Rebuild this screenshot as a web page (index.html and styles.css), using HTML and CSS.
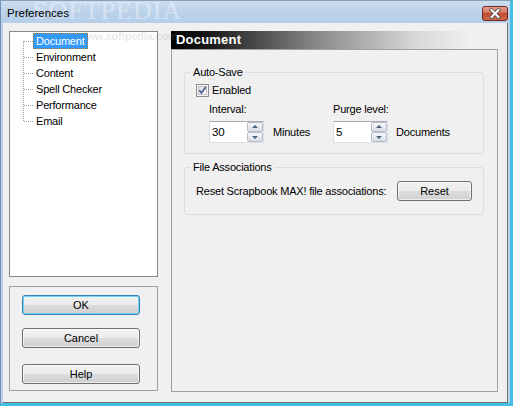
FILE: index.html
```html
<!DOCTYPE html>
<html>
<head>
<meta charset="utf-8">
<title>Preferences</title>
<link rel="stylesheet" href="styles.css">
</head>
<body>
<div class="window">
  <div class="titlebar">
    <span class="title">Preferences</span>
    <span class="watermark">SOFTPEDIA</span>
    <span class="close">
      <svg width="26" height="15" viewBox="0 0 26 15">
        <defs>
          <linearGradient id="cg" x1="0" y1="0" x2="0" y2="1">
            <stop offset="0" stop-color="#e8a493"/>
            <stop offset="0.45" stop-color="#d47560"/>
            <stop offset="0.5" stop-color="#c4482f"/>
            <stop offset="1" stop-color="#cf6a4a"/>
          </linearGradient>
        </defs>
        <rect x="0.5" y="0.5" width="25" height="14" rx="2.5" fill="url(#cg)" stroke="#6e2b22"/>
        <path d="M9.5 4 L16.5 11 M16.5 4 L9.5 11" stroke="#4a4a4a" stroke-width="3.6" stroke-linecap="square"/>
        <path d="M9.5 4 L16.5 11 M16.5 4 L9.5 11" stroke="#ffffff" stroke-width="2" stroke-linecap="square"/>
      </svg>
    </span>
  </div>
  <div class="client">
    <div class="leftcol">
      <div class="tree">
        <span class="wm2">www.softpedia.com</span>
        <ul class="tree-list">
          <li><span class="node selected">Document</span></li>
          <li><span class="node">Environment</span></li>
          <li><span class="node">Content</span></li>
          <li><span class="node">Spell Checker</span></li>
          <li><span class="node">Performance</span></li>
          <li><span class="node">Email</span></li>
        </ul>
      </div>
      <div class="btngroup">
        <div class="btn default">OK</div>
        <div class="btn cancel">Cancel</div>
        <div class="btn help">Help</div>
      </div>
    </div>
    <div class="panel">
      <div class="panel-head">Document</div>
      <div class="panel-body">
        <fieldset class="group autosave">
          <legend>Auto-Save</legend>
          <div class="check">
            <span class="cb">
              <svg width="13" height="13" viewBox="0 0 13 13">
                <defs>
                  <linearGradient id="cbg" x1="0" y1="0" x2="1" y2="1">
                    <stop offset="0" stop-color="#dadada"/>
                    <stop offset="1" stop-color="#ffffff"/>
                  </linearGradient>
                </defs>
                <rect x="0.5" y="0.5" width="12" height="12" fill="#f4f4f4" stroke="#8e8f8f"/>
                <rect x="2.5" y="2.5" width="8" height="8" fill="url(#cbg)" stroke="#c4c4c4"/>
                <path d="M3.2 6.3 L5.4 8.8 L9.8 3" fill="none" stroke="#4a5f95" stroke-width="1.7"/>
              </svg>
            </span>
            <span>Enabled</span>
          </div>
          <div class="fields">
            <div class="field interval">
              <div class="flabel">Interval:</div>
              <div class="spinrow">
                <div class="spin">
                  <span class="val">30</span>
                  <div class="arrows"><span class="arr up"></span><span class="arr down"></span></div>
                </div>
                <span class="unit">Minutes</span>
              </div>
            </div>
            <div class="field purge">
              <div class="flabel">Purge level:</div>
              <div class="spinrow">
                <div class="spin">
                  <span class="val">5</span>
                  <div class="arrows"><span class="arr up"></span><span class="arr down"></span></div>
                </div>
                <span class="unit">Documents</span>
              </div>
            </div>
          </div>
        </fieldset>
        <fieldset class="group files">
          <legend>File Associations</legend>
          <div class="reset-row">
            <span class="reset-text">Reset Scrapbook MAX! file associations:</span>
            <div class="btn reset">Reset</div>
          </div>
        </fieldset>
      </div>
    </div>
  </div>
</div>
</body>
</html>
```

FILE: styles.css
```css
html, body {
  margin: 0;
  padding: 0;
  background: #ffffff;
}
body {
  font-family: "Liberation Sans", Arial, sans-serif;
  font-size: 11px;
  letter-spacing: -0.2px;
  color: #000;
}
.window {
  width: 513px;
  height: 406px;
  box-sizing: border-box;
  background: #bdd3eb;
  border-top: 1px solid #8aa0b8;
  border-left: 1px solid #6f90b4;
  border-right: 3px solid #41bfe7;
  border-bottom: 3px solid #41bfe7;
  display: flex;
  flex-direction: column;
  position: relative;
  overflow: hidden;
}
.titlebar {
  height: 22px;
  flex: none;
  display: flex;
  align-items: center;
  background: linear-gradient(180deg, #cddcee 0%, #bad1ea 55%, #b6cee9 100%);
  position: relative;
}
.title {
  margin-left: 6px;
  margin-top: 1px;
  font-size: 11.5px;
  letter-spacing: 0;
  color: #000;
  position: relative;
  z-index: 1;
}
.watermark {
  position: absolute;
  left: 32px;
  top: 0;
  line-height: 20px;
  font-family: "Liberation Serif", "Times New Roman", serif;
  font-size: 26px;
  letter-spacing: 1px;
  color: rgba(255, 255, 255, 0.4);
}
.close {
  margin-left: auto;
  margin-right: 2px;
  margin-top: 2px;
  width: 26px;
  height: 15px;
  display: block;
}
.close svg { display: block; }

.client {
  flex: 1;
  margin-left: 2px;
  margin-right: 2px;
  background: #f0f0f0;
  border-right: 1px solid #707070;
  border-bottom: 1px solid #707070;
  display: flex;
  padding: 8px 0 0 6px;
  box-sizing: border-box;
}
.leftcol {
  width: 149px;
  display: flex;
  flex-direction: column;
}
.tree {
  height: 246px;
  box-sizing: border-box;
  background: #fff;
  border: 1px solid #828790;
  position: relative;
}
.wm2 {
  position: absolute;
  left: 68px;
  top: -2px;
  color: rgba(150, 150, 150, 0.22);
  font-size: 11px;
  font-weight: bold;
}
.tree-list {
  list-style: none;
  margin: 0;
  padding: 1px 0 0 0;
  position: relative;
}
.tree-list::before {
  content: "";
  position: absolute;
  left: 13px;
  top: 9px;
  height: 80px;
  border-left: 1px dotted #a0a0a0;
}
.tree-list li {
  height: 16px;
  padding-left: 23px;
  position: relative;
  display: flex;
  align-items: center;
}
.tree-list li::before {
  content: "";
  position: absolute;
  left: 14px;
  top: 8px;
  width: 9px;
  border-top: 1px dotted #a0a0a0;
}
.node {
  height: 14px;
  line-height: 14px;
  padding: 0 2px;
  border: 1px solid transparent;
  white-space: nowrap;
}
.node.selected {
  background: #3399ff;
  color: #fff;
  border: 1px dotted #b07a30;
}
.btngroup {
  margin-top: 9px;
  height: 105px;
  box-sizing: border-box;
  border: 1px solid #a0a0a0;
  padding: 8px 0 0 12px;
  display: flex;
  flex-direction: column;
}
.btn {
  box-sizing: border-box;
  height: 20px;
  border: 1px solid #707070;
  border-radius: 3px;
  background: linear-gradient(180deg, #f2f2f2 0%, #ebebeb 48%, #dddddd 52%, #cfcfcf 100%);
  box-shadow: inset 0 0 0 1px rgba(255, 255, 255, 0.6);
  display: flex;
  align-items: center;
  justify-content: center;
  letter-spacing: 0;
}
.btngroup .btn { width: 118px; }
.btn.default {
  border-color: #3c7fb1;
  box-shadow: inset 0 0 0 1px #6fd4f6;
}
.btn.cancel { margin-top: 13px; }
.btn.help { margin-top: 16px; }

.panel {
  margin-left: 13px;
  width: 327px;
  display: flex;
  flex-direction: column;
}
.panel-head {
  height: 18px;
  flex: none;
  background: linear-gradient(90deg, #000000 0%, #1a1a1a 12%, #8a8a8a 45%, #d8d8d8 75%, #f0f0f0 92%);
  color: #fff;
  font-weight: bold;
  font-size: 13px;
  letter-spacing: 0.2px;
  line-height: 18px;
  padding-left: 5px;
}
.panel-body {
  height: 343px;
  box-sizing: border-box;
  border: 1px solid #a0a0a0;
  padding: 16px 0 0 12px;
}
.group {
  margin: 0;
  width: 300px;
  box-sizing: border-box;
  border: 1px solid #d5dfe5;
  border-radius: 3px;
  padding: 0 0 0 6px;
  min-inline-size: 0;
}
.group legend {
  padding: 0 2px;
  line-height: 13px;
  height: 13px;
}
.autosave {
  padding-bottom: 10px;
}
.check {
  margin: 5px 0 0 5px;
  display: flex;
  align-items: center;
  height: 13px;
  line-height: 13px;
}
.cb {
  width: 13px;
  height: 13px;
  margin-right: 3px;
}
.cb svg { display: block; }
.fields {
  display: flex;
  margin: 6px 0 0 18px;
}
.field.interval { width: 124px; }
.flabel {
  height: 13px;
  line-height: 13px;
}
.spinrow {
  margin-top: 5px;
  display: flex;
  align-items: center;
}
.spin {
  width: 55px;
  height: 22px;
  box-sizing: border-box;
  background: #fff;
  border: 1px solid #dbdfe6;
  border-top-color: #abadb3;
  display: flex;
  align-items: center;
}
.val {
  flex: 1;
  padding-left: 2px;
  font-size: 11.5px;
}
.arrows {
  width: 16px;
  height: 20px;
  display: flex;
  flex-direction: column;
}
.arr {
  flex: 1;
  box-sizing: border-box;
  border: 1px solid #b6bdc8;
  border-radius: 2px;
  background: linear-gradient(180deg, #f7f8fa 0%, #e7eaee 50%, #d9dde4 100%);
  position: relative;
}
.arr::after {
  content: "";
  position: absolute;
  left: 4px;
  width: 0;
  height: 0;
  border-left: 3px solid transparent;
  border-right: 3px solid transparent;
}
.arr.up::after {
  top: 2px;
  border-bottom: 3px solid #4d6185;
}
.arr.down::after {
  top: 3px;
  border-top: 3px solid #4d6185;
}
.interval .unit { margin-left: 9px; }
.purge .unit { margin-left: 8px; }

.files {
  margin-top: 7px;
  padding-bottom: 13px;
}
.reset-row {
  margin: 7px 0 0 5px;
  display: flex;
  align-items: center;
}
.reset-text {
  width: 201px;
  white-space: nowrap;
}
.btn.reset {
  width: 75px;
}
```
